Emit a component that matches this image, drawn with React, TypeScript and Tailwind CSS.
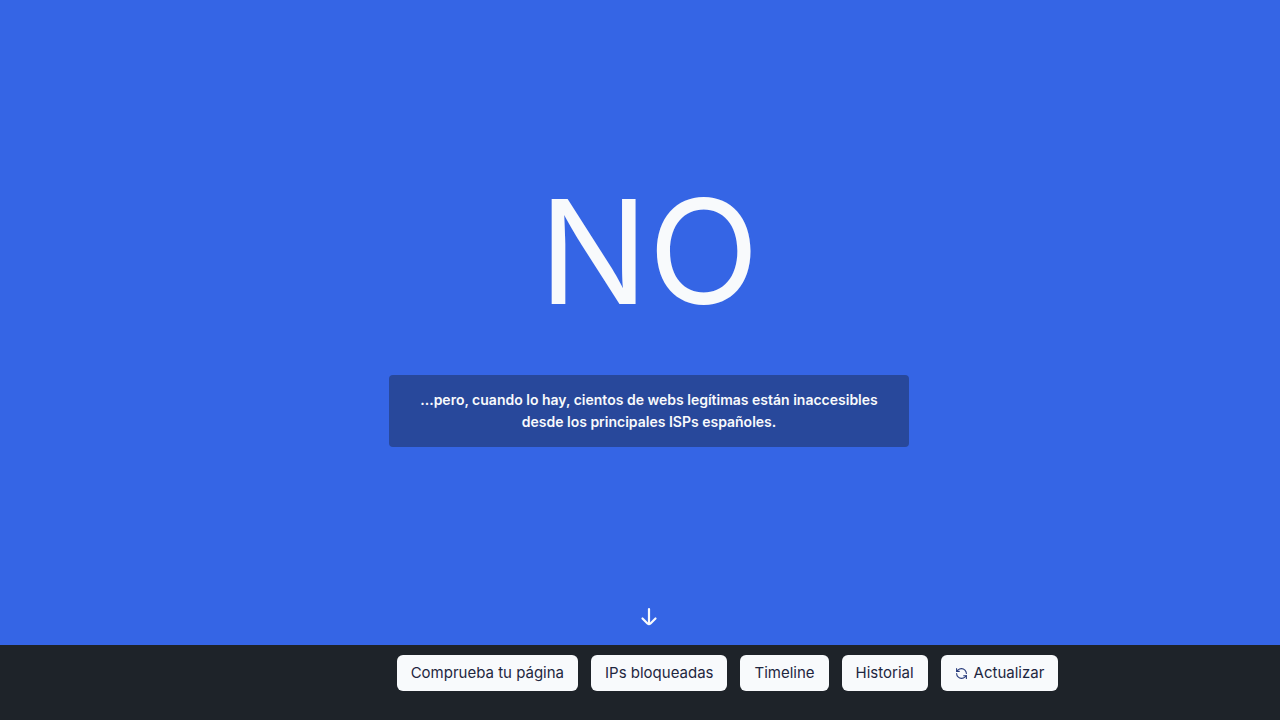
import type { ReactNode } from 'react'
import { RefreshCcw } from 'lucide-react'

const LINKS = [
  { href: '#comprueba', label: 'Comprueba tu página' },
  { href: '#ips', label: 'IPs bloqueadas' },
  { href: '#timeline', label: 'Timeline' },
  { href: '#historial', label: 'Historial' },
]

const ACTION =
  'flex h-9 items-center gap-[6px] whitespace-nowrap rounded-md bg-[#f8fafc] px-[14px] text-[15px] leading-5 text-[#1e2640] hover:bg-white'

function Notice({ children }: { children: ReactNode }) {
  return (
    <p className="mt-12 w-full max-w-[520px] rounded-sm bg-[#28489b] px-6 py-[14px] text-center text-sm font-semibold leading-[22px] text-[#f8fafc]">
      {children}
    </p>
  )
}

function ScrollArrow() {
  return (
    <svg
      width="24"
      height="24"
      viewBox="0 0 24 24"
      fill="none"
      stroke="currentColor"
      strokeWidth="2.2"
      strokeLinecap="round"
      strokeLinejoin="round"
    >
      <path d="M12 4v15" />
      <path d="m5.500 13.500 5 5q1.500 1.200 3 0l5-5" />
    </svg>
  )
}

export default function App() {
  return (
    <div className="flex min-h-screen flex-col bg-[#3565e5] font-['Inter',sans-serif]">
      <main className="flex flex-1 flex-col items-center pl-[18px]">
        <div className="flex flex-1 flex-col items-center justify-center pt-[18px]">
          <h1 className="text-[145px] font-normal leading-[150px] text-[#f8fafc]">NO</h1>
          <Notice>
            ...pero, cuando lo hay, cientos de webs legítimas están inaccesibles desde los principales
            ISPs españoles.
          </Notice>
        </div>
        <a href="#comprueba" aria-label="Ver más" className="pb-4 text-[#f8fafc]">
          <ScrollArrow />
        </a>
      </main>
      <footer className="bg-[#1e2329] pb-[29px] pl-[175px] pt-[10px]">
        <nav className="flex justify-center gap-[13px]">
          {LINKS.map((link) => (
            <a key={link.href} href={link.href} className={ACTION}>
              {link.label}
            </a>
          ))}
          <button type="button" className={ACTION}>
            <RefreshCcw size={13} strokeWidth={2} className="text-[#26397a]" />
            Actualizar
          </button>
        </nav>
      </footer>
    </div>
  )
}
